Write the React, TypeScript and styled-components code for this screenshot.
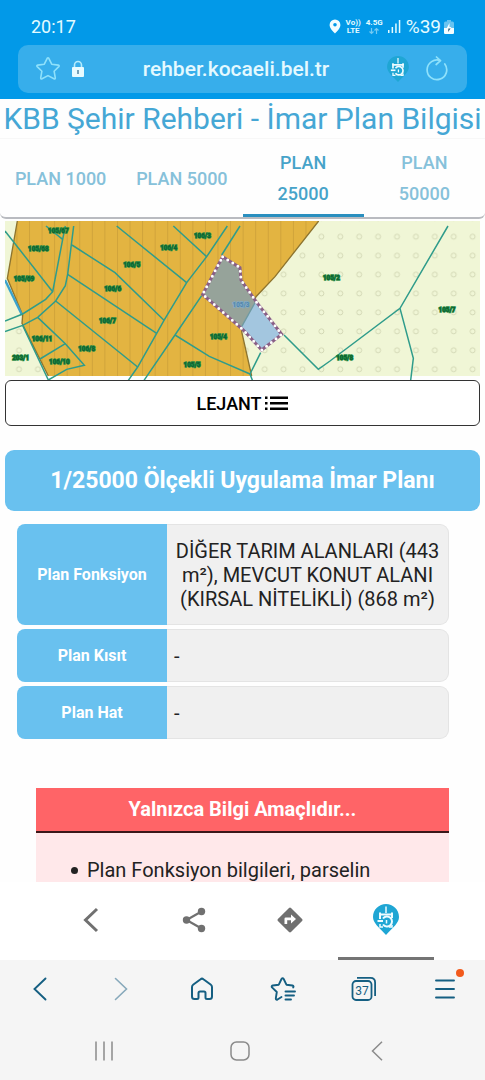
import React from "react";
import styled, { createGlobalStyle } from "styled-components";

const GlobalStyle = createGlobalStyle`
  *, *::before, *::after { box-sizing: border-box; }
  html, body, #root { height: 100%; }
  body {
    margin: 0;
    background: #fefefe;
    color: #222;
    font-family: Roboto, "Liberation Sans", sans-serif;
  }
  button { font: inherit; color: inherit; background: none; border: 0; padding: 0; margin: 0; }
  svg { display: block; flex: none; }
`;

const Screen = styled.div`
  display: flex;
  flex-direction: column;
  height: 100vh;
`;

const BrowserHeader = styled.header`
  flex: none;
  padding: 8px 18px 6px;
  background: #0299e8;
  color: #e4fbff;
`;

const StatusRow = styled.div`
  display: flex;
  align-items: center;
  justify-content: space-between;
  height: 37px;
  padding: 0 13px;
  font-size: 18px;
`;

const StatusIcons = styled.div`
  display: flex;
  align-items: center;
  gap: 5px;
`;

const NetworkLabel = styled.div`
  display: flex;
  flex-direction: column;
  align-items: center;
  font-size: 8px;
  line-height: 8px;
  font-weight: 700;
`;

const Battery = styled.div`
  display: flex;
  align-items: center;
  gap: 3px;
  font-size: 19px;
`;

const AddressBar = styled.div`
  display: flex;
  align-items: center;
  height: 48px;
  padding: 0 17px;
  gap: 10px;
  border-radius: 10px;
  background: #37aeeb;
`;

const AddressInput = styled.input`
  flex: 1;
  min-width: 0;
  padding: 0;
  border: 0;
  outline: 0;
  background: transparent;
  color: #e4f9ff;
  font: 500 21px Roboto, sans-serif;
  text-align: center;
`;

const IconButton = styled.button`
  display: flex;
  align-items: center;
  justify-content: center;
`;

const ReloadButton = styled(IconButton)`
  margin-left: 5px;
`;

const Page = styled.main`
  flex: 1;
  min-height: 0;
  overflow: hidden;
`;

const Title = styled.h1`
  margin: 0;
  height: 40px;
  border-bottom: 1px solid #f7f7f7;
  color: #45a7d5;
  font-size: 30px;
  line-height: 40px;
  font-weight: 400;
  text-align: center;
  white-space: nowrap;
`;

const TabBar = styled.nav`
  display: flex;
  height: 80px;
  border-bottom: 2px solid #b9bbc0;
  border-radius: 0 0 6px 6px;
`;

const Tab = styled.button<{ $active?: boolean }>`
  flex: 1 1 0;
  padding: 3px 12px 0;
  color: ${(p) => (p.$active ? "#46a3c9" : "#86c1da")};
  border-bottom: 3px solid ${(p) => (p.$active ? "#2a8fbf" : "transparent")};
  font-size: 18px;
  line-height: 31px;
  font-weight: 500;
`;

const Content = styled.div`
  padding: 2px 5px 0;
`;

const MapSvg = styled.svg`
  width: 100%;
  height: auto;
`;

const LegendButton = styled.button`
  display: flex;
  align-items: center;
  justify-content: center;
  gap: 3px;
  width: 100%;
  height: 46px;
  border: 1px solid #333;
  border-radius: 6px;
  background: #fff;
  color: #000;
  font-size: 18px;
  font-weight: 500;
`;

const PlanBanner = styled.h2`
  margin: 24px 0 9px;
  padding: 16px;
  border-radius: 9px;
  background: #69c1ef;
  color: #fff;
  font-size: 23px;
  line-height: 29px;
  font-weight: 700;
  text-align: center;
`;

const PlanTable = styled.table`
  width: calc(100% - 43px);
  margin-left: 12px;
  border-collapse: separate;
  border-spacing: 0 4px;
`;

const PlanLabel = styled.th`
  width: 150px;
  height: 53px;
  padding: 0;
  border-radius: 8px 0 0 8px;
  background: #69c1ef;
  color: #fff;
  font-size: 16px;
  font-weight: 700;
`;

const PlanValue = styled.td<{ $centered?: boolean }>`
  padding: ${(p) => (p.$centered ? "14px 7px 13px" : "0 7px")};
  border: 1px solid #e4e4e4;
  border-left: 0;
  border-radius: 0 9px 9px 0;
  background: #f0f0f0;
  font-size: 20px;
  line-height: 24px;
  text-align: ${(p) => (p.$centered ? "center" : "left")};
`;

const Notice = styled.section`
  margin: 45px 31px 0;
  background: #ffe8ea;
`;

const NoticeTitle = styled.h3`
  margin: 0;
  border-bottom: 2px solid #3b1719;
  background: #ff6467;
  color: #fff;
  font-size: 20px;
  line-height: 43px;
  font-weight: 700;
  text-align: center;
`;

const NoticeList = styled.ul`
  margin: 0;
  padding: 25px 20px 60px 35px;
  font-size: 20px;
  line-height: 24px;
  list-style: none;
`;

const NoticeItem = styled.li`
  display: flex;
  gap: 9px;

  &::before {
    content: "";
    flex: none;
    width: 7px;
    height: 7px;
    margin-top: 9px;
    border-radius: 50%;
    background: #222;
  }
`;

const SiteBar = styled.nav`
  flex: none;
  display: flex;
  height: 78px;
  padding: 0 51px 0 50px;
  background: #fff;
  color: #707070;
`;

const SiteBarButton = styled(IconButton)<{ $active?: boolean }>`
  flex: 1 1 0;
  border-bottom: 3px solid ${(p) => (p.$active ? "#747474" : "transparent")};
`;

const BrowserBar = styled.nav`
  flex: none;
  display: flex;
  height: 58px;
  background: #f5f5f5;
  color: #155f82;
`;

const BrowserButton = styled(IconButton)<{ $muted?: boolean }>`
  flex: 1 1 0;
  color: ${(p) => (p.$muted ? "#87a9bb" : "inherit")};
`;

const MenuWrap = styled.span`
  position: relative;
`;

const MenuBadge = styled.span`
  position: absolute;
  top: -10px;
  right: -9px;
  width: 8px;
  height: 8px;
  border-radius: 50%;
  background: #f25a1c;
`;

const SystemBar = styled.nav`
  flex: none;
  display: flex;
  height: 62px;
  padding: 4px 40px 0 36px;
  background: #f5f5f5;
`;

const PARCEL_LINES = [
  "M15 48L158 230",
  "M138 33L188 73",
  "M196 33L188 73L158 230L137 253L68 297L15 318",
  "M221 33L203 178L196 212L167 258L113 307L68 331L15 350",
  "M216 90L345 173L492 316",
  "M203 178L470 355",
  "M167 258L413 456",
  "M113 307L196 386L253 451L200 463L145 495L68 331",
  "M196 386L120 432",
  "M350 33L560 203",
  "M385 496L413 456L492 316L560 203L620 125L682 33",
  "M720 33L665 120",
  "M520 33L620 125",
  "M432 496L525 360L605 242",
  "M525 360L628 424L750 477",
  "M782 413L750 477L758 498",
  "M852 360L955 463L990 438L1200 280L1344 33",
  "M1200 280L1240 430L1232 496",
];

const PARCEL_LABELS: [string, number, number][] = [
  ["105/67", 175, 47],
  ["105/68", 115, 103],
  ["105/69", 72, 193],
  ["106/3", 607, 64],
  ["106/4", 506, 100],
  ["106/5", 395, 150],
  ["106/6", 338, 221],
  ["106/7", 322, 317],
  ["106/11", 126, 371],
  ["106/8", 260, 402],
  ["106/10", 178, 441],
  ["203/1", 62, 429],
  ["105/4", 655, 365],
  ["105/5", 576, 451],
  ["105/2", 994, 190],
  ["105/7", 1341, 285],
  ["105/8", 1034, 429],
];

const ZONE = "M52 18L22 190L68 300L66 325L145 483L755 483L725 350L768 245L825 185L956 18Z";
const PARCEL = "M668 125L720 158L723 195L770 262L845 358L785 405L730 345L608 238Z";

function PlanMap() {
  return (
    <MapSvg viewBox="15 18 1425 477" role="img" aria-label="Plan haritası">
      <defs>
        <pattern id="dots" x="29" y="37" width="56.7" height="56.8" patternUnits="userSpaceOnUse">
          <circle cx="28" cy="28" r="7.5" fill="none" stroke="#cdd2ad" strokeWidth="2.5" />
        </pattern>
        <pattern id="stripes" x="87" y="0" width="37.7" height="40" patternUnits="userSpaceOnUse">
          <path d="M1.5 0V40" stroke="#cc9f38" strokeWidth="2.5" />
        </pattern>
      </defs>
      <rect x="15" y="18" width="1425" height="465" fill="#f0f6d6" />
      <rect x="15" y="330" width="160" height="153" fill="url(#dots)" />
      <rect x="710" y="18" width="730" height="465" fill="url(#dots)" />
      <path d={ZONE} fill="#e3b441" />
      <path d={ZONE} fill="url(#stripes)" />
      <path d="M52 18L22 190L68 300L66 325L145 483M956 18L825 185L768 245L725 350L755 483" fill="none" stroke="#8d742f" strokeWidth="4" />
      <path d="M15 195L66 300" stroke="#3aa2cc" strokeWidth="7" />
      <g fill="none" stroke="#2f9c8b" strokeWidth="4.5">
        {PARCEL_LINES.map((d) => (
          <path key={d} d={d} />
        ))}
      </g>
      <path d={PARCEL} fill="#96a39a" />
      <path d="M768 258L845 358L785 405L725 335Z" fill="#a3c6df" />
      <path d="M768 258L725 335" stroke="#6f9aa2" strokeWidth="4" />
      <path d={PARCEL} fill="none" stroke="#895f86" strokeWidth="9" />
      <path d={PARCEL} fill="none" stroke="#fff" strokeWidth="9" strokeDasharray="0 18" strokeLinecap="round" />
      <g fontSize="19" fontWeight="700" textAnchor="middle" stroke="#1f8a44" strokeWidth="4" fill="#0f5f30" paintOrder="stroke">
        {PARCEL_LABELS.map(([name, x, y]) => (
          <text key={name} x={x} y={y + 6}>
            {name}
          </text>
        ))}
      </g>
      <text x="723" y="275" fontSize="19" fontWeight="700" textAnchor="middle" stroke="#7fabc8" strokeWidth="4" fill="#5385ab" paintOrder="stroke">
        105/3
      </text>
    </MapSvg>
  );
}

/** City emblem inside a map pin. */
function CityPin({ width, height }: { width: number; height: number }) {
  return (
    <svg width={width} height={height} viewBox="0 0 26 31">
      <path d="M13 0C20 0 26 5.500 26 13C26 19 20 23.500 13 31C6 23.500 0 19 0 13C0 5.500 6 0 13 0Z" fill="#1fa6d4" />
      <g fill="none" stroke="#effcff" strokeWidth="2">
        <path d="M13 2.500V9" strokeWidth="1.500" />
        <path d="M7 15V10.500H19V14" />
        <path d="M7 8.500V11M19 8.500V11" />
        <path d="M4.500 17H10" />
        <path d="M10 14.500A5 5 0 1 1 10 20.500" />
        <path d="M13.500 16V19.500" strokeWidth="1.500" />
        <path d="M7 20V23H10M19 21V23H16" strokeWidth="1.500" />
      </g>
    </svg>
  );
}

function App() {
  return (
    <Screen>
      <GlobalStyle />
      <BrowserHeader>
        <StatusRow>
          <time>20:17</time>
          <StatusIcons>
            <svg width="12" height="15" viewBox="0 0 12 15">
              <path d="M6 0.500a5.400 5.400 0 0 1 5.400 5.400C11.400 9.500 7.500 12.500 6 14.500 4.500 12.500.6 9.500.6 5.900A5.400 5.400 0 0 1 6 .5Z" fill="#f2fdff" />
              <circle cx="6" cy="5.800" r="1.800" fill="#0299e8" />
            </svg>
            <NetworkLabel>
              <span>Vo))</span>
              <span>LTE</span>
            </NetworkLabel>
            <NetworkLabel>
              <span>4.5G</span>
              <svg width="10" height="8" viewBox="0 0 10 8" fill="none" stroke="#74c9f2" strokeWidth="1.200">
                <path d="M2.500 1v5.500M.5 4.500l2 2 2-2M7.500 7V1.500M5.500 3.500l2-2 2 2" />
              </svg>
            </NetworkLabel>
            <svg width="13" height="13" viewBox="0 0 13 13" fill="#e4fbff">
              <path d="M0 10h1.500v3H0zM3.600 7h1.500v6h-1.500zM7.200 3.500h1.500V13h-1.500zM10.800 0h1.500v13h-1.500z" />
            </svg>
            <Battery>
              <span>%39</span>
              <svg width="10" height="14" viewBox="0 0 10 14">
                <path d="M3 0h4v1.500h1.500Q10 1.500 10 3v9.500Q10 14 8.500 14h-7Q0 14 0 12.500V3Q0 1.500 1.500 1.500H3Z" fill="#68c3f0" />
                <path d="M0 8h10v4.500Q10 14 8.500 14h-7Q0 14 0 12.500Z" fill="#f4fdff" />
                <path d="M5.500 3L2.500 8.500h2L4 12l3.500-5h-2Z" fill="#f4fdff" />
                <path d="M4.400 8.500h2.200L4 12Z" fill="#2f5d7a" />
              </svg>
            </Battery>
          </StatusIcons>
        </StatusRow>
        <AddressBar>
          <IconButton aria-label="Yer imi ekle">
            <svg width="26" height="26" viewBox="0 0 26 26" fill="none" stroke="#8fe1fb" strokeWidth="1.600" strokeLinejoin="round">
              <path d="M12.200 2.300q.8-1.200 1.600 0l2.900 5.900 6.600.9q1.500.4.500 1.500l-4.700 4.600 1.200 6.700q.1 1.500-1.300.9L13 19.600l-6 3.200q-1.400.6-1.300-.9l1.200-6.700-4.700-4.600q-1-1.100.5-1.500l6.600-.9Z" />
            </svg>
          </IconButton>
          <svg width="14" height="18" viewBox="0 0 14 18">
            <path d="M3.500 8V5a3.500 3.500 0 0 1 7 0v3" fill="none" stroke="#b5ecfd" strokeWidth="1.600" />
            <rect x="1" y="7" width="12" height="10" rx="1" fill="#e8fbff" />
            <path d="M7 10v4" stroke="#5a8ba6" strokeWidth="1.600" />
          </svg>
          <AddressInput aria-label="Adres" defaultValue="rehber.kocaeli.bel.tr" />
          <CityPin width={22} height={26} />
          <ReloadButton aria-label="Yenile">
            <svg width="26" height="26" viewBox="0 0 26 26" fill="none" stroke="#8fe1fb" strokeWidth="1.700" strokeLinecap="round" strokeLinejoin="round">
              <path d="M20.800 8A9.800 9.800 0 1 1 16.500 4.700M12.500 1l4 3.700-4.300 3.800" />
            </svg>
          </ReloadButton>
        </AddressBar>
      </BrowserHeader>

      <Page>
        <Title>KBB Şehir Rehberi - İmar Plan Bilgisi</Title>
        <TabBar>
          <Tab>PLAN 1000</Tab>
          <Tab>PLAN 5000</Tab>
          <Tab $active>PLAN 25000</Tab>
          <Tab>PLAN 50000</Tab>
        </TabBar>
        <Content>
          <PlanMap />
          <LegendButton>
            LEJANT
            <svg width="24" height="16" viewBox="0 0 24 16" fill="#000">
              <path d="M0 1.500h2.500v2.500H0zM0 7h2.500v2.500H0zM0 12.500h2.500v2.500H0zM5 1.500h18v2.500H5zM5 7h18v2.500H5zM5 12.500h18v2.500H5z" />
            </svg>
          </LegendButton>
          <PlanBanner>1/25000 Ölçekli Uygulama İmar Planı</PlanBanner>
          <PlanTable>
            <tbody>
              <tr>
                <PlanLabel scope="row">Plan Fonksiyon</PlanLabel>
                <PlanValue $centered>DİĞER TARIM ALANLARI (443 m²), MEVCUT KONUT ALANI (KIRSAL NİTELİKLİ) (868 m²)</PlanValue>
              </tr>
              <tr>
                <PlanLabel scope="row">Plan Kısıt</PlanLabel>
                <PlanValue>-</PlanValue>
              </tr>
              <tr>
                <PlanLabel scope="row">Plan Hat</PlanLabel>
                <PlanValue>-</PlanValue>
              </tr>
            </tbody>
          </PlanTable>
          <Notice>
            <NoticeTitle>Yalnızca Bilgi Amaçlıdır...</NoticeTitle>
            <NoticeList>
              <NoticeItem>Plan Fonksiyon bilgileri, parselin</NoticeItem>
            </NoticeList>
          </Notice>
        </Content>
      </Page>

      <SiteBar>
        <SiteBarButton aria-label="Geri">
          <svg width="30" height="26" viewBox="0 0 30 26" fill="none" stroke="currentColor" strokeWidth="3">
            <path d="M14 2L2.500 13L14 24" />
          </svg>
        </SiteBarButton>
        <SiteBarButton aria-label="Paylaş">
          <svg width="24" height="26" viewBox="0 0 24 26">
            <path d="M19.500 4.500L4.500 13l15 8.500" fill="none" stroke="currentColor" strokeWidth="2.200" />
            <g fill="currentColor">
              <circle cx="19.500" cy="4.500" r="3.700" />
              <circle cx="4.500" cy="13" r="3.700" />
              <circle cx="19.500" cy="21.500" r="3.700" />
            </g>
          </svg>
        </SiteBarButton>
        <SiteBarButton aria-label="Yol tarifi">
          <svg width="26" height="26" viewBox="0 0 26 26">
            <path d="M12 .9q1-.9 2 0L25.100 12q.9 1 0 2L14 25.100q-1 .9-2 0L.9 14q-.9-1 0-2Z" fill="currentColor" />
            <path d="M7.500 17v-5.200q0-1.300 1.300-1.300H14V7.500l5 4.500-5 4.500v-3.300h-3.800V17Z" fill="#fff" />
          </svg>
        </SiteBarButton>
        <SiteBarButton $active aria-label="Şehir rehberi">
          <CityPin width={26} height={31} />
        </SiteBarButton>
      </SiteBar>

      <BrowserBar>
        <BrowserButton aria-label="Geri">
          <svg width="14" height="24" viewBox="0 0 14 24" fill="none" stroke="currentColor" strokeWidth="1.900" strokeLinecap="round">
            <path d="M12.500 1.500L1.500 12l11 10.500" />
          </svg>
        </BrowserButton>
        <BrowserButton $muted aria-label="İleri">
          <svg width="14" height="24" viewBox="0 0 14 24" fill="none" stroke="currentColor" strokeWidth="1.600" strokeLinecap="round">
            <path d="M1.500 1.500l11 10.500-11 10.500" />
          </svg>
        </BrowserButton>
        <BrowserButton aria-label="Ana sayfa">
          <svg width="22" height="24" viewBox="0 0 22 24" fill="none" stroke="currentColor" strokeWidth="2" strokeLinejoin="round">
            <path d="M9.600 2.200q1.400-1.100 2.800 0l7.200 5.300q1.400 1 1.400 2.500v9.500q0 2.500-2.500 2.500H16q-1.500 0-1.500-1.500V16q0-1.500-1.500-1.500H9q-1.500 0-1.500 1.500v4.500Q7.500 22 6 22H3.500Q1 22 1 19.500V10Q1 8.500 2.400 7.500Z" />
          </svg>
        </BrowserButton>
        <BrowserButton aria-label="Yer imleri">
          <svg width="26" height="26" viewBox="0 0 26 26" fill="none" stroke="currentColor" strokeWidth="1.900" strokeLinecap="round" strokeLinejoin="round">
            <path d="M11.500 21l-4 2.500q-1.800.7-1.700-1.200l1-6.300-4.800-4.600q-1-1.300.8-1.900l6-.8 2.700-5.700q1.100-1.600 2.200 0l2.700 5.700 6 .8q1.800.6.8 1.900" />
            <path d="M15.500 15.500H25M15.500 19.500H24M15.500 23.500H21" />
          </svg>
        </BrowserButton>
        <BrowserButton aria-label="37 sekme">
          <svg width="26" height="26" viewBox="0 0 26 26" fill="none" stroke="currentColor" strokeWidth="1.800">
            <rect x="1.500" y="5" width="19" height="19" rx="3.500" />
            <path d="M6 1.900h13.500q4.600 0 4.600 4.600V20" />
            <text x="11" y="19" fontSize="12" textAnchor="middle" stroke="none" fill="currentColor">
              37
            </text>
          </svg>
        </BrowserButton>
        <BrowserButton aria-label="Menü">
          <MenuWrap>
            <svg width="20" height="20" viewBox="0 0 20 20" fill="none" stroke="currentColor" strokeWidth="1.900" strokeLinecap="round">
              <path d="M1 1.500h18M1 10h18M1 18.500h18" />
            </svg>
            <MenuBadge />
          </MenuWrap>
        </BrowserButton>
      </BrowserBar>

      <SystemBar>
        <BrowserButton aria-label="Son uygulamalar">
          <svg width="20" height="20" viewBox="0 0 20 20" stroke="#8b8b8b" strokeWidth="1.500">
            <path d="M2 0.500v19M10 .5v19M18 .5v19" />
          </svg>
        </BrowserButton>
        <BrowserButton aria-label="Ana ekran">
          <svg width="20" height="20" viewBox="0 0 20 20" fill="none" stroke="#8b8b8b" strokeWidth="1.500">
            <rect x="1" y="1" width="18" height="18" rx="5.500" />
          </svg>
        </BrowserButton>
        <BrowserButton aria-label="Sistem geri">
          <svg width="12" height="20" viewBox="0 0 12 20" fill="none" stroke="#8b8b8b" strokeWidth="1.500">
            <path d="M11 0.700L1.500 10l9.500 9.300" />
          </svg>
        </BrowserButton>
      </SystemBar>
    </Screen>
  );
}

export default App;
